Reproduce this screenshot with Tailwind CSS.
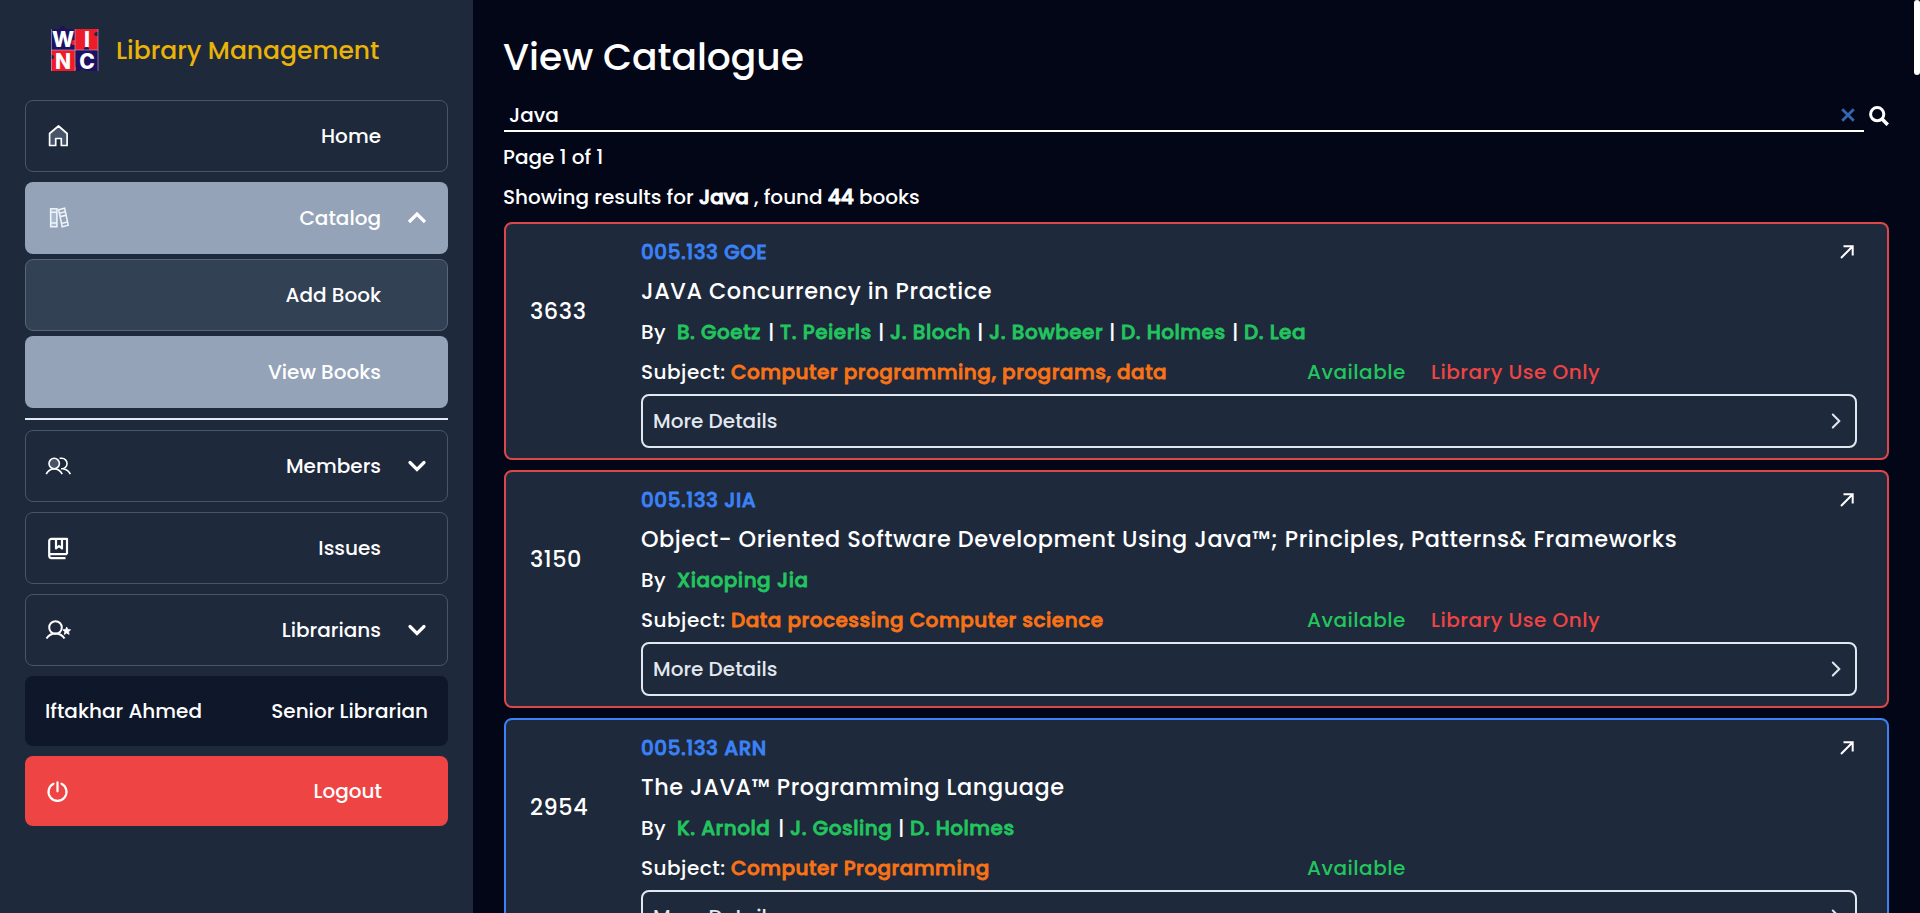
<!DOCTYPE html>
<html lang="en">
<head>
<meta charset="utf-8">
<title>Library Management</title>
<script src="https://cdn.jsdelivr.net/npm/@tailwindcss/browser@4"></script>
</head>
<body class="h-[913px] overflow-hidden bg-[#020617] font-['Poppins','Inter',sans-serif] text-[20px] font-medium text-white whitespace-nowrap">
<div class="flex h-full">

  <!-- Sidebar -->
  <aside class="flex h-full w-[473px] shrink-0 flex-col bg-[#1e293b] px-[25px]">
    <div class="flex h-[100px] items-center pl-[26px]">
      <svg class="h-[48px] w-[48px] shrink-0" viewBox="0 0 48 48" font-family="Inter, sans-serif" font-weight="800" font-size="21" text-anchor="middle" fill="#fff">
        <path d="M0 3h9c-1-4 6-4 5 0h11v21H0z" fill="#1d1160"/>
        <path d="M24 3h23v3c-5-1-5 5 0 4v14H24v-5c-5 1-5-6 0-5z" fill="#ee1c2b"/>
        <path d="M0 24h24v17c4-1 4 4 0 3v1H0V33c4 1 4-5 0-4z" fill="#ee1c2b"/>
        <path d="M25 24h8c-1-4 6-4 5 0h9v21H34c0-3-5-3-5 0h-4z" fill="#1d1160"/>
        <path d="M24 3v42M0 24h47M.5 3v42M47 3v42" stroke="#b9b4d6" stroke-width=".6" fill="none"/>
        <text x="12" y="21">W</text><text x="36" y="21">I</text>
        <text x="12" y="42.500">N</text><text x="36" y="42.500">C</text>
      </svg>
      <span class="ml-[17px] mt-[2px] text-[25px] text-[#eab308]">Library Management</span>
    </div>

    <nav class="flex flex-col">
      <a class="flex h-[72px] items-center justify-between rounded-lg border border-[#475569] pl-[20px] pr-[66px]">
        <svg class="size-[24px]" viewBox="0 0 24 24" fill="none" stroke="currentColor" stroke-width="1.7" stroke-linejoin="round"><path d="M3.6 21.5V9.5L12.5 2l8.6 7.5v12h-5.8v-7h-5.6v7z" fill="#475569"/></svg>
        <span>Home</span>
      </a>
      <a class="mt-[10px] flex h-[72px] items-center rounded-lg bg-[#94a3b8] pl-[21px] pr-[21px]">
        <svg class="size-[24px]" viewBox="0 0 24 24" fill="none" stroke="#eef3fa" stroke-width="1.600"><path d="M4.7 2.8h6.2v17.9H4.7zM4.7 6.2h6.2M4.7 17h6.2" fill="#a9bad0"/><path d="M12.6 3.7l6-1.5 3.6 17-6 1.5zM13.4 7.2l6-1.5M14.2 10.6l6-1.5M15.3 17.5l6.2-1.5"/></svg>
        <span class="ml-auto">Catalog</span>
        <svg class="ml-[26px] h-[20px] w-[20px]" viewBox="0 0 20 20" fill="none" stroke="currentColor" stroke-width="3.2"><path d="M2 14l8-8 8 8"/></svg>
      </a>
      <a class="mt-[5px] flex h-[72px] items-center justify-end rounded-lg border border-[#56657a] bg-[#334155] pr-[66px]"><span>Add Book</span></a>
      <a class="mt-[5px] flex h-[72px] items-center justify-end rounded-lg bg-[#94a3b8] pr-[67px]"><span>View Books</span></a>
      <div class="my-[10px] h-[2px] bg-[#e2e8f0]"></div>
      <a class="flex h-[72px] items-center rounded-lg border border-[#475569] pl-[19px] pr-[20px]">
        <svg class="h-[20px] w-[27px]" viewBox="0 0 27 20" fill="none" stroke="currentColor" stroke-width="1.6"><circle cx="9.2" cy="7.5" r="5.2" fill="#475569"/><path d="M1.2 18.2c1.6-3.2 4.7-5.3 8-5.3s6.4 2.1 8 5.3M14.6 2.3h2.2a5.2 5.2 0 010 10.5h-.8M18.4 13c3 .4 5.6 2.300 7 5.200"/></svg>
        <span class="ml-auto">Members</span>
        <svg class="ml-[26px] h-[20px] w-[20px]" viewBox="0 0 20 20" fill="none" stroke="currentColor" stroke-width="3.2" stroke-linecap="round"><path d="M3 6.500l7 7 7-7"/></svg>
      </a>
      <a class="mt-[10px] flex h-[72px] items-center justify-between rounded-lg border border-[#475569] pl-[20px] pr-[66px]">
        <svg class="size-[24px]" viewBox="0 0 24 24" fill="none" stroke="currentColor" stroke-width="2.200" stroke-linejoin="round"><path d="M21 18.200V2.800H5.500a2.300 2.300 0 00-2.300 2.300V19.500c0 1.500.8 2.600 2.300 2.600H19.500M3.200 18.200H21"/><path d="M10 2.800v9.700l3-2.500 3 2.500V2.800"/></svg>
        <span>Issues</span>
      </a>
      <a class="mt-[10px] flex h-[72px] items-center rounded-lg border border-[#475569] pl-[19px] pr-[20px]">
        <svg class="h-[22px] w-[27px]" viewBox="0 0 27 22" fill="none" stroke="currentColor" stroke-width="2"><circle cx="10.500" cy="8.500" r="6.300"/><path d="M1.500 19.500c2-3 5.200-5 9-5s7 2 9 5"/><path d="M21.700 8l1.100 2.500 2.800.3-2.100 1.900.6 2.700-2.400-1.400-2.400 1.400.6-2.700-2.100-1.900 2.800-.3z" fill="currentColor" stroke-width=".8"/></svg>
        <span class="ml-auto">Librarians</span>
        <svg class="ml-[26px] h-[20px] w-[20px]" viewBox="0 0 20 20" fill="none" stroke="currentColor" stroke-width="3.2" stroke-linecap="round"><path d="M3 6.500l7 7 7-7"/></svg>
      </a>
      <div class="mt-[10px] flex h-[70px] items-center justify-between rounded-lg bg-[#0f172a] px-5">
        <span>Iftakhar Ahmed</span><span>Senior Librarian</span>
      </div>
      <a class="mt-[10px] flex h-[70px] items-center justify-between rounded-lg bg-[#ef4444] pl-[20px] pr-[66px]">
        <svg class="size-[25px]" viewBox="0 0 25 25" fill="none" stroke="currentColor" stroke-width="2.200" stroke-linecap="round"><path d="M8.500 4.800a9 9 0 108 0M12.500 3.300v9"/></svg>
        <span>Logout</span>
      </a>
    </nav>
  </aside>

  <!-- Catalogue -->
  <main class="flex min-w-0 flex-1 flex-col pl-[31px] pr-[31px]">
    <h1 class="-ml-px mt-[32px] h-[50px] shrink-0 text-[37.6px] leading-[50px]">View Catalogue</h1>
    <div class="mt-[16px] flex h-[34px] shrink-0">
      <div class="flex w-[1360px] items-center justify-between border-b-2 border-white pl-[5px] pr-[9px]">
        <span class="mt-[2px]">Java</span>
        <svg class="mt-[2px] size-[14px]" viewBox="0 0 14 14" fill="none" stroke="#3566ae" stroke-width="2.800"><path d="M1.200 1.200l11.600 11.600M12.800 1.200L1.200 12.800"/></svg>
      </div>
      <svg class="ml-[5px] mt-[8px] size-[20px]" viewBox="0 0 20 20" fill="none" stroke="currentColor" stroke-width="3"><circle cx="8.200" cy="8.200" r="6.600"/><path d="M12.800 12.800l6 6" stroke-width="3.600"/></svg>
    </div>
    <p class="-ml-px mt-[5px] h-10 shrink-0 leading-10">Page 1 of 1</p>
    <p class="-ml-px h-10 shrink-0 leading-10">Showing results for <b class="font-medium [-webkit-text-stroke:1px]">Java</b> , found <b class="font-medium [-webkit-text-stroke:1px]">44</b> books</p>

    <div class="mt-[5px] flex flex-col gap-[10px]">

      <article class="flex h-[238px] shrink-0 rounded-lg border-2 border-[#dc474b] bg-[#1e293b] pl-[24px] pr-[30px] pt-[8px]">
        <div class="flex h-[159px] w-[111px] shrink-0 items-center text-[22.4px] tracking-[0.56px]">3633</div>
        <div class="flex min-w-0 flex-1 flex-col">
          <div class="flex h-10 items-center justify-between pr-[3px] text-[#3b82f6]"><span class="tracking-[0.5px] [-webkit-text-stroke:0.8px]">005.133 GOE</span>
            <svg class="size-[14px] text-white" viewBox="0 0 14 14" fill="none" stroke="currentColor" stroke-width="2"><path d="M1 13L12.700 1.300M3.500 1.300h9.200v9.200"/></svg></div>
          <h2 class="h-[39px] text-[22.4px] leading-[39px] tracking-[0.56px]">JAVA Concurrency in Practice</h2>
          <div class="flex h-[41px] items-center tracking-[0.5px]">
            <span class="w-[36px]">By</span>
            <b class="w-[91px] font-medium text-[#22c55e] [-webkit-text-stroke:0.8px]">B. Goetz</b><span class="w-[12px]">|</span>
            <b class="w-[98px] font-medium text-[#22c55e] [-webkit-text-stroke:0.8px]">T. Peierls</b><span class="w-[12px]">|</span>
            <b class="w-[87px] font-medium text-[#22c55e] [-webkit-text-stroke:0.8px]">J. Bloch</b><span class="w-[12px]">|</span>
            <b class="w-[120px] font-medium text-[#22c55e] [-webkit-text-stroke:0.8px]">J. Bowbeer</b><span class="w-[12px]">|</span>
            <b class="w-[111px] font-medium text-[#22c55e] [-webkit-text-stroke:0.8px]">D. Holmes</b><span class="w-[12px]">|</span>
            <b class="font-medium text-[#22c55e] [-webkit-text-stroke:0.8px]">D. Lea</b>
          </div>
          <div class="flex h-10 items-center">
            <span class="w-[90px] tracking-[0.5px]">Subject:</span>
            <b class="w-[576px] font-medium tracking-[0.5px] text-[#f97316] [-webkit-text-stroke:0.8px]">Computer programming, programs, data</b>
            <span class="w-[124px] tracking-[0.5px] text-[#22c55e]">Available</span>
            <span class="tracking-[0.5px] text-[#ef4444]">Library Use Only</span>
          </div>
          <div class="mt-[2px] flex h-[54px] shrink-0 items-center justify-between rounded-lg border-2 border-[#e2e8f0] pl-[10px] pr-[14px] text-[#e2e8f0]">
            <span>More Details</span>
            <svg class="h-[16px] w-[10px]" viewBox="0 0 10 16" fill="none" stroke="currentColor" stroke-width="2" stroke-linecap="round"><path d="M1.800 1.500L8.300 8l-6.500 6.500"/></svg>
          </div>
        </div>
      </article>

      <article class="flex h-[238px] shrink-0 rounded-lg border-2 border-[#dc474b] bg-[#1e293b] pl-[24px] pr-[30px] pt-[8px]">
        <div class="flex h-[159px] w-[111px] shrink-0 items-center text-[22.4px] tracking-[0.56px]">3150</div>
        <div class="flex min-w-0 flex-1 flex-col">
          <div class="flex h-10 items-center justify-between pr-[3px] text-[#3b82f6]"><span class="tracking-[0.5px] [-webkit-text-stroke:0.8px]">005.133 JIA</span>
            <svg class="size-[14px] text-white" viewBox="0 0 14 14" fill="none" stroke="currentColor" stroke-width="2"><path d="M1 13L12.700 1.300M3.500 1.300h9.200v9.200"/></svg></div>
          <h2 class="h-[39px] text-[22.4px] leading-[39px] tracking-[0.56px]">Object- Oriented Software Development Using Java™; Principles, Patterns&amp; Frameworks</h2>
          <div class="flex h-[41px] items-center tracking-[0.5px]">
            <span class="w-[36px]">By</span>
            <b class="font-medium text-[#22c55e] [-webkit-text-stroke:0.8px]">Xiaoping Jia</b>
          </div>
          <div class="flex h-10 items-center">
            <span class="w-[90px] tracking-[0.5px]">Subject:</span>
            <b class="w-[576px] font-medium tracking-[0.5px] text-[#f97316] [-webkit-text-stroke:0.8px]">Data processing Computer science</b>
            <span class="w-[124px] tracking-[0.5px] text-[#22c55e]">Available</span>
            <span class="tracking-[0.5px] text-[#ef4444]">Library Use Only</span>
          </div>
          <div class="mt-[2px] flex h-[54px] shrink-0 items-center justify-between rounded-lg border-2 border-[#e2e8f0] pl-[10px] pr-[14px] text-[#e2e8f0]">
            <span>More Details</span>
            <svg class="h-[16px] w-[10px]" viewBox="0 0 10 16" fill="none" stroke="currentColor" stroke-width="2" stroke-linecap="round"><path d="M1.800 1.500L8.300 8l-6.500 6.500"/></svg>
          </div>
        </div>
      </article>

      <article class="flex h-[238px] shrink-0 rounded-lg border-2 border-[#3b82f6] bg-[#1e293b] pl-[24px] pr-[30px] pt-[8px]">
        <div class="flex h-[159px] w-[111px] shrink-0 items-center text-[22.4px] tracking-[0.56px]">2954</div>
        <div class="flex min-w-0 flex-1 flex-col">
          <div class="flex h-10 items-center justify-between pr-[3px] text-[#3b82f6]"><span class="tracking-[0.5px] [-webkit-text-stroke:0.8px]">005.133 ARN</span>
            <svg class="size-[14px] text-white" viewBox="0 0 14 14" fill="none" stroke="currentColor" stroke-width="2"><path d="M1 13L12.700 1.300M3.500 1.300h9.200v9.200"/></svg></div>
          <h2 class="h-[39px] text-[22.4px] leading-[39px] tracking-[0.56px]">The JAVA™ Programming Language</h2>
          <div class="flex h-[41px] items-center tracking-[0.5px]">
            <span class="w-[36px]">By</span>
            <b class="w-[101px] font-medium text-[#22c55e] [-webkit-text-stroke:0.8px]">K. Arnold</b><span class="w-[12px]">|</span>
            <b class="w-[108px] font-medium text-[#22c55e] [-webkit-text-stroke:0.8px]">J. Gosling</b><span class="w-[12px]">|</span>
            <b class="font-medium text-[#22c55e] [-webkit-text-stroke:0.8px]">D. Holmes</b>
          </div>
          <div class="flex h-10 items-center">
            <span class="w-[90px] tracking-[0.5px]">Subject:</span>
            <b class="w-[576px] font-medium tracking-[0.5px] text-[#f97316] [-webkit-text-stroke:0.8px]">Computer Programming</b>
            <span class="tracking-[0.5px] text-[#22c55e]">Available</span>
          </div>
          <div class="mt-[2px] flex h-[54px] shrink-0 items-center justify-between rounded-lg border-2 border-[#e2e8f0] pl-[10px] pr-[14px] text-[#e2e8f0]">
            <span>More Details</span>
            <svg class="h-[16px] w-[10px]" viewBox="0 0 10 16" fill="none" stroke="currentColor" stroke-width="2" stroke-linecap="round"><path d="M1.800 1.500L8.300 8l-6.500 6.500"/></svg>
          </div>
        </div>
      </article>
    </div>
  </main>
</div>
<!-- Scrollbar thumb -->
<div class="absolute right-0 top-0 h-[75px] w-[6px] rounded-[3px] bg-white"></div>
</body>
</html>
